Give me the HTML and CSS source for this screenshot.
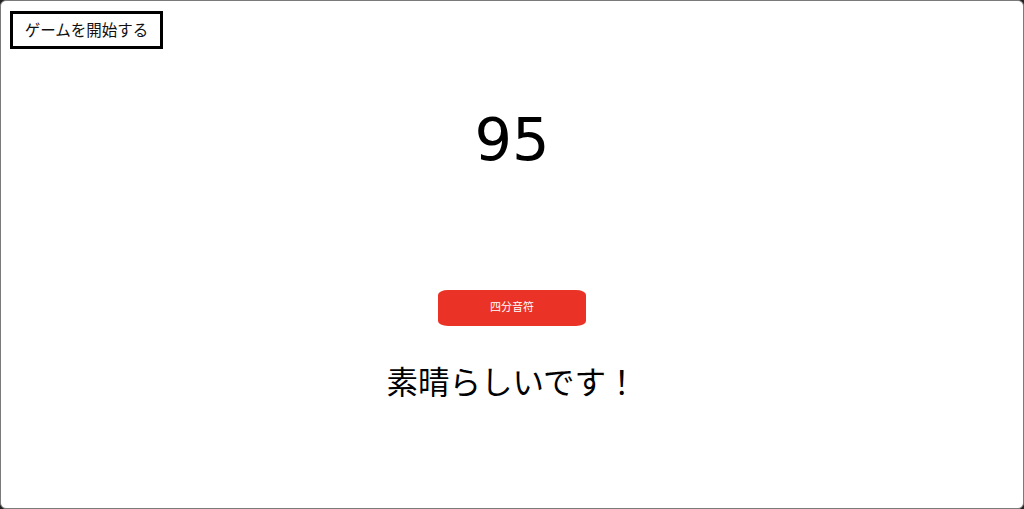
FILE: index.html
```html
<!DOCTYPE html>
<html lang="ja">
<head>
<meta charset="utf-8">
<link rel="stylesheet" href="styles.css">
</head>
<body>
<div class="frame">
  <div class="top">
    <button class="start">ゲームを開始する</button>
  </div>
  <div class="score">95</div>
  <button class="note">四分音符</button>
  <div class="msg">素晴らしいです！</div>
</div>
</body>
</html>
```
FILE: styles.css
```css
html, body {
  margin: 0;
  padding: 0;
  height: 100%;
  background: #222;
}
body {
  font-family: "DejaVu Sans", "Noto Sans CJK JP", sans-serif;
}
.frame {
  box-sizing: border-box;
  height: 509px;
  width: 1024px;
  background: #fff;
  border: 1px solid #7a7a7a;
  border-radius: 6px;
  display: flex;
  flex-direction: column;
  align-items: center;
}
.top {
  align-self: stretch;
  padding: 10px 0 0 9px;
}
.start {
  box-sizing: border-box;
  width: 153px;
  height: 38px;
  border: 3px solid #000;
  background: #fff;
  font-family: "Noto Sans CJK JP", sans-serif;
  font-size: 15.5px;
  color: #111;
  padding: 0 0 2px;
}
.score {
  margin-top: 55px;
  font-size: 59px;
  line-height: 72px;
  color: #000;
}
.note {
  margin-top: 114px;
  width: 148px;
  height: 36px;
  border: none;
  border-radius: 10px / 5px;
  background: #ea3326;
  color: #fff;
  font-family: "Noto Sans CJK JP", sans-serif;
  font-size: 11px;
  padding: 0 0 4px;
}
.msg {
  margin-top: 32px;
  font-family: "Noto Sans CJK JP", sans-serif;
  font-size: 31.5px;
  line-height: 44px;
  color: #000;
}
```
